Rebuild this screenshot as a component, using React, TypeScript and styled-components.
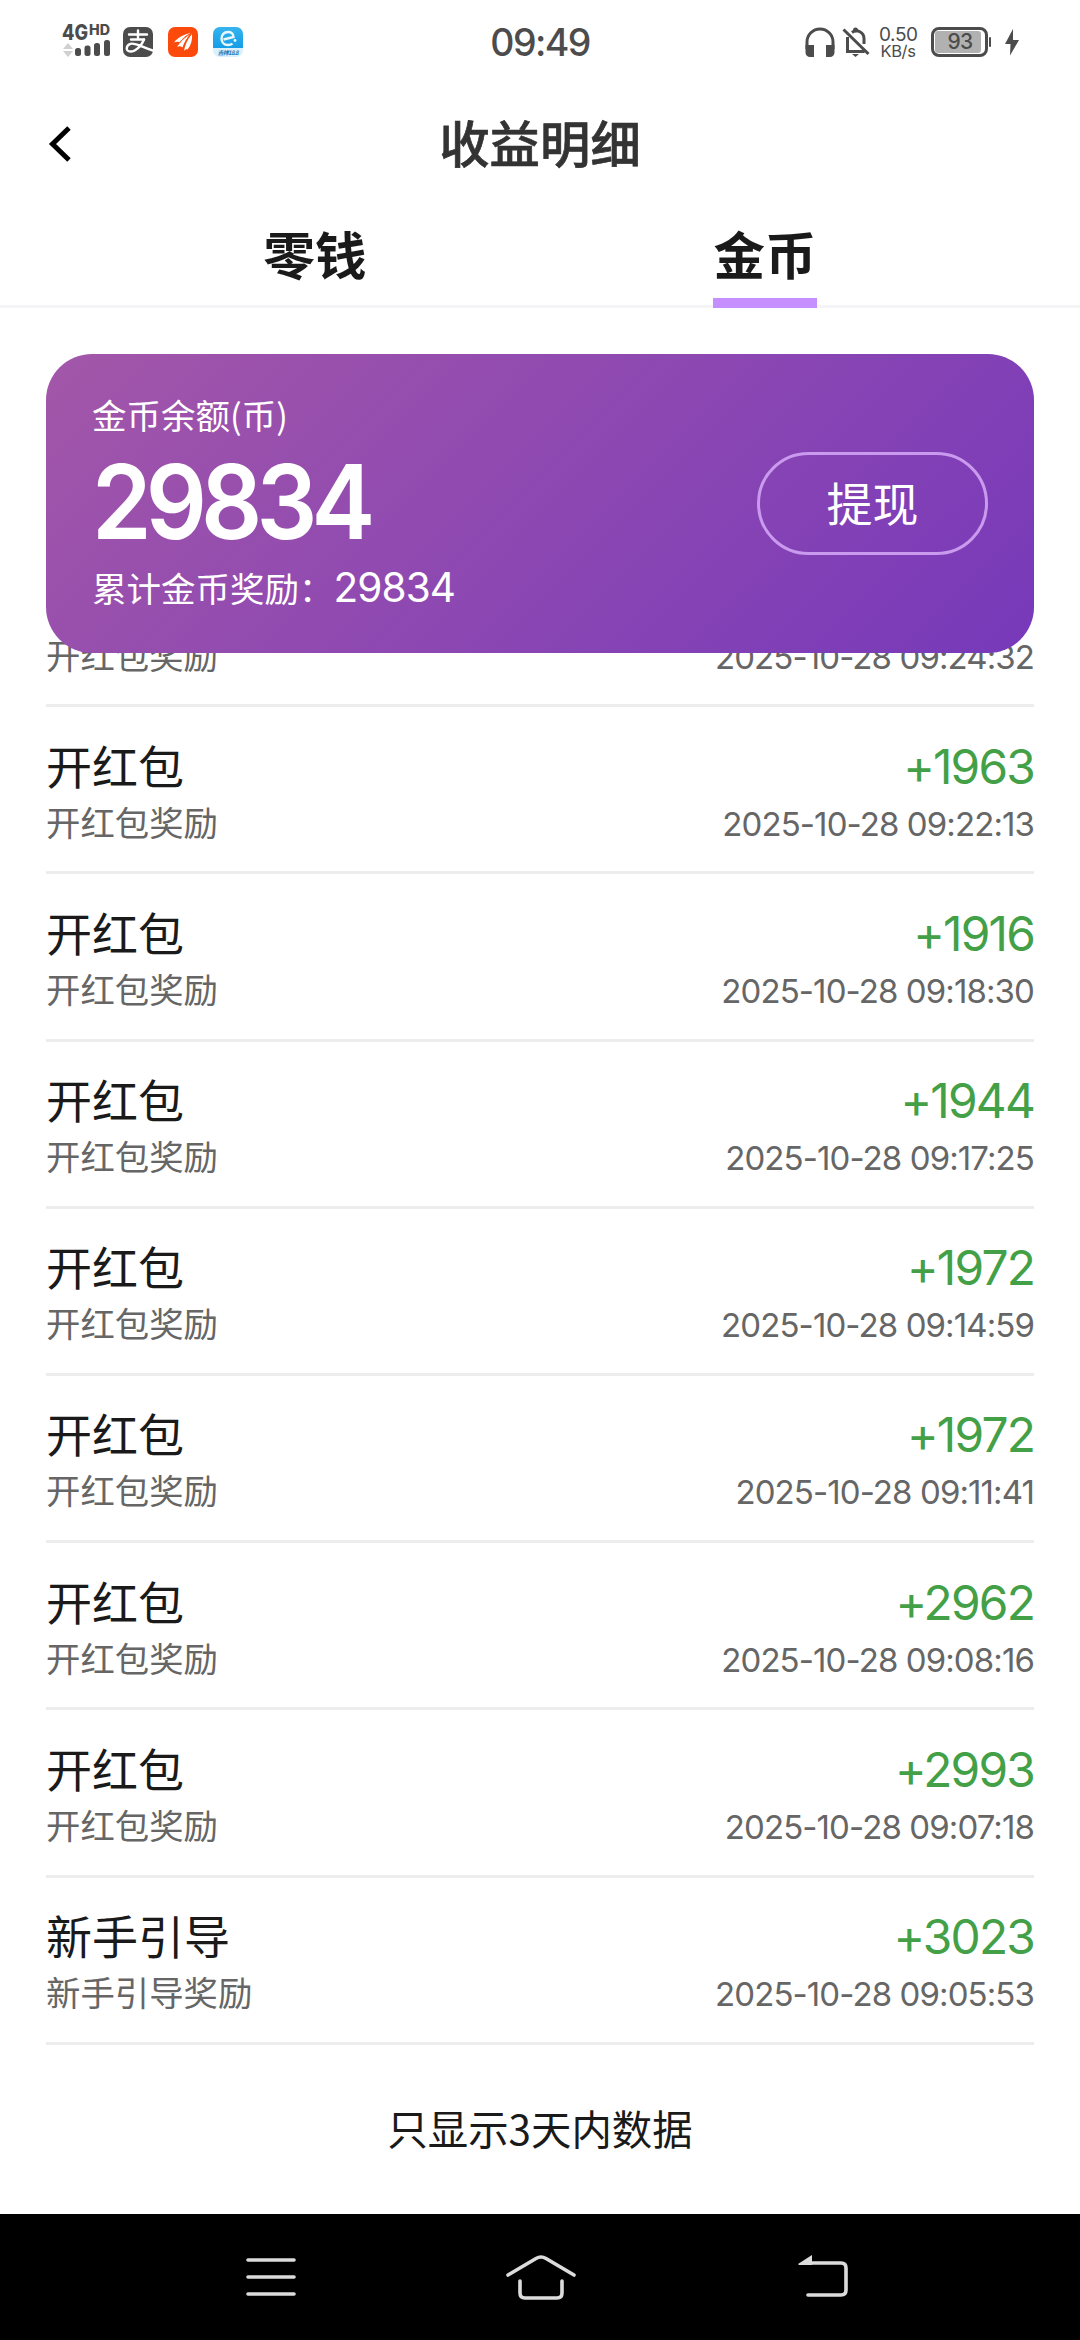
import React from "react";
import styled, { createGlobalStyle } from "styled-components";

const cjk = `"Noto Sans CJK SC", sans-serif`;

const Global = createGlobalStyle`
  * { box-sizing: border-box; }
  body { margin: 0; background: #fff; font-family: Inter, ${cjk}; }
  h1, h2, p { margin: 0; font-weight: 400; }
`;

const Screen = styled.div`
  width: 1080px;
  height: 2340px;
  display: flex;
  flex-direction: column;
  background: #fff;
  overflow: hidden;
`;

const StatusBar = styled.header`
  height: 90px;
  flex: none;
  display: grid;
  grid-template-columns: 460px 160px 1fr;
  color: #4c4c4c;
`;
const StatusLeft = styled.div`
  display: flex;
  align-items: flex-start;
  padding: 22px 0 0 62px;
`;
const Clock = styled.div`
  font: 500 37.5px/85px Inter, sans-serif;
  text-align: center;
  letter-spacing: -1.6px;
`;
const StatusRight = styled.div`
  display: flex;
  align-items: flex-start;
  padding: 27px 0 0 185px;
`;
const Signal = styled.div`
  width: 50px;
  height: 36px;
  margin-right: 11px;
  svg {
    overflow: visible;
  }
`;
const AppIcon = styled.svg`
  width: 30px;
  height: 30px;
  margin: 5px 15px 0 0;
  flex: none;
`;
const MutedBell = styled.svg`
  margin-left: 7px;
`;
const Bolt = styled.svg`
  margin-top: 2px;
`;
const Speed = styled.div`
  width: 38px;
  margin: -1px 14px 0 9px;
  font: 400 19px/17px Inter, sans-serif;
  text-align: center;
  letter-spacing: -0.4px;
  white-space: nowrap;
`;
const SpeedUnit = styled.div`
  font-size: 16.5px;
  line-height: 16px;
`;
const Battery = styled.div`
  position: relative;
  width: 57px;
  height: 30px;
  border: 3px solid #4c4c4c;
  border-radius: 8px;
  padding: 1px 4px 1px 1px;
  margin-right: 17px;
  &::after {
    content: "";
    position: absolute;
    right: -6px;
    top: 7px;
    width: 2px;
    height: 10px;
    border-radius: 1px;
    background: #4c4c4c;
  }
`;
const BatteryFill = styled.div`
  height: 22px;
  border-radius: 3px;
  background: #b1b1b1;
  font: 500 21px/22px Inter, sans-serif;
  text-align: center;
  padding-left: 4px;
  letter-spacing: -0.8px;
`;

const TitleBar = styled.div`
  height: 108px;
  flex: none;
  display: grid;
  grid-template-columns: 120px 1fr 120px;
  align-items: start;
`;
const BackButton = styled.button`
  border: 0;
  height: 108px;
  align-items: center;
  padding: 0 0 0 47px;
  background: none;
  display: flex;
`;
const Title = styled.h1`
  font: 500 50.4px/103px ${cjk};
  -webkit-text-stroke: 0.7px #333;
  color: #333;
  text-align: center;
`;

const Tabs = styled.nav`
  height: 110px;
  flex: none;
  padding: 0 90px;
  display: grid;
  grid-template-columns: 1fr 1fr;
  justify-items: center;
  border-bottom: 3px solid #f5f5f7;
`;
const Tab = styled.div<{ $active?: boolean }>`
  height: 110px;
  font: 700 51.5px/110px ${cjk};
  color: #1a1a1a;
  border-bottom: 10px solid ${(p) => (p.$active ? "#c68fff" : "transparent")};
`;

const Card = styled.section`
  position: relative;
  z-index: 1;
  flex: none;
  height: 299px;
  margin: 46px 46px 0;
  padding: 34px 46px 0;
  border-radius: 46px;
  background: linear-gradient(135deg, #a357a9 0%, #7739ba 100%);
  color: #fff;
  display: flex;
  justify-content: space-between;
`;
const Balance = styled.div`
  display: flex;
  flex-direction: column;
`;
const Label = styled.p`
  font: 400 34.5px/52px ${cjk};
`;
const Amount = styled.p`
  height: 120px;
  font: 600 103px/124px Inter, sans-serif;
  letter-spacing: -6.4px;
  transform: scaleX(0.93);
  transform-origin: left;
`;
const Total = styled.p`
  font: 400 34.5px/54px ${cjk};
  display: flex;
  white-space: nowrap;
`;
const TotalNumber = styled.span`
  font: 400 40.5px/55px Inter, sans-serif;
  letter-spacing: -0.9px;
`;
const Withdraw = styled.button`
  width: 231px;
  height: 103px;
  margin-top: 64px;
  padding: 0 0 5px;
  border: 3px solid #ca9aee;
  border-radius: 52px;
  background: none;
  color: #fff;
  font: 400 46px/92px ${cjk};
`;

const List = styled.ul`
  list-style: none;
  margin: -113px 46px 0;
  padding: 0;
  flex: none;
`;
const Row = styled.li`
  height: 167.2px;
  border-bottom: 3px solid #ededed;
  display: flex;
  justify-content: space-between;
  padding-top: 26.5px;
`;
const Column = styled.div<{ $end?: boolean }>`
  display: flex;
  flex-direction: column;
  align-items: ${(p) => (p.$end ? "flex-end" : "flex-start")};
`;
const RowTitle = styled.h2`
  font: 400 46px/61px ${cjk};
  color: #1a1a1a;
`;
const RowNote = styled.p`
  font: 400 34.4px/52px ${cjk};
  color: #666;
`;
const Gain = styled.p`
  font: 400 47.8px/66px Inter, sans-serif;
  letter-spacing: -1.8px;
  color: #43a047;
`;
const Time = styled.p`
  font: 400 33px/48px Inter, sans-serif;
  letter-spacing: -0.9px;
  color: #666;
`;
const Footnote = styled.p`
  flex: 1;
  padding-top: 53px;
  font: 400 40.4px/60px ${cjk};
  color: #1a1a1a;
  text-align: center;
`;

const SystemNav = styled.footer`
  height: 126px;
  flex: none;
  padding-left: 135px;
  background: #000;
  display: grid;
  grid-template-columns: 272px 268px 297px;
  place-items: center;
`;

const records = [
  ["开红包", "+1944", "2025-10-28 09:24:32"],
  ["开红包", "+1963", "2025-10-28 09:22:13"],
  ["开红包", "+1916", "2025-10-28 09:18:30"],
  ["开红包", "+1944", "2025-10-28 09:17:25"],
  ["开红包", "+1972", "2025-10-28 09:14:59"],
  ["开红包", "+1972", "2025-10-28 09:11:41"],
  ["开红包", "+2962", "2025-10-28 09:08:16"],
  ["开红包", "+2993", "2025-10-28 09:07:18"],
  ["新手引导", "+3023", "2025-10-28 09:05:53"],
];

function Status() {
  return (
    <StatusBar>
      <StatusLeft>
        <Signal>
          <svg width="50" height="36" viewBox="0 0 50 36" fill="#4c4c4c" fontFamily="Inter, sans-serif" fontWeight="800">
            <text x="0" y="18" fontSize="21" textLength="26" lengthAdjust="spacingAndGlyphs">4G</text>
            <text x="27" y="13" fontSize="14" textLength="21" lengthAdjust="spacingAndGlyphs">HD</text>
            <path d="M1 27l5-6 5 6zM1 29l5 6 5-6z" fill="#d0d0d0" />
            <rect x="13" y="26" width="6" height="8" rx="2.5" />
            <rect x="22.5" y="23.5" width="6" height="10.5" rx="2.5" />
            <rect x="32" y="21" width="6" height="13" rx="2.5" />
            <rect x="42" y="18" width="6" height="16" rx="2.5" />
          </svg>
        </Signal>
        <AppIcon viewBox="0 0 30 30">
          <rect width="30" height="30" rx="7" fill="#4c4c4c" />
          <g fill="none" stroke="#fff" strokeWidth="2.4" strokeLinecap="round">
            <path d="M6 7.500h18M15 3.500v8.500M8 12.500h13" />
            <path d="M21 12.500C19 18 13 24.500 7.500 24.500S3 18 7.500 16.800C13 15.500 19 20.500 30 23.500" />
          </g>
        </AppIcon>
        <AppIcon viewBox="0 0 30 30">
          <rect width="30" height="30" rx="7" fill="#fb4a0b" />
          <g fill="#fff">
            <path d="M6 15.500C10 10 16 7.500 23 6c-5 3-8 6-10.500 9.500-2-1-4-1-6.500 0z" />
            <path d="M9 20c3-5 8-10 14.500-13.500C19 11 16.500 15 14.500 20.500c-1.500-1.500-3.500-1.500-5.500-.5z" />
            <path d="M16 24c1-6 3.500-12 8-17 .5 6-1 11.500-4.500 15.500-1-.5-2.500 0-3.500 1.500z" />
          </g>
          <path d="M11.500 16C14 12 18 8.500 23 6.500M15 21.500c1.500-6 4-10.500 8.500-15" stroke="#fb4a0b" strokeWidth="1" fill="none" />
        </AppIcon>
        <AppIcon viewBox="0 0 30 30">
          <defs>
            <linearGradient id="sky" x1="0" y1="0" x2="0" y2="1">
              <stop offset="0" stopColor="#36b4ee" />
              <stop offset="1" stopColor="#149de7" />
            </linearGradient>
          </defs>
          <rect width="30" height="30" rx="7" fill="#d9f1fd" />
          <path d="M7 0h16a7 7 0 0 1 7 7v14H0V7a7 7 0 0 1 7-7z" fill="url(#sky)" />
          <path d="M10.500 12.500l10-2.500c0-3.500-2.500-5-5.500-5-4 0-6.500 3-6.500 6.500S11 18 15 18c2 0 3.500-.5 4.500-1.500" fill="none" stroke="#e8f8ff" strokeWidth="2.4" />
          <circle cx="22" cy="13.500" r="1.400" fill="#e8f8ff" />
          <text x="4.5" y="27.500" fontSize="6" fontWeight="700" fontStyle="italic" fontFamily={cjk} fill="#1976b8" textLength="21">吉祥18.8</text>
        </AppIcon>
      </StatusLeft>
      <Clock>09:49</Clock>
      <StatusRight>
        <svg width="30" height="30" viewBox="0 0 30 30" fill="#4c4c4c">
          <path d="M2 22v-7a13 13 0 0 1 26 0v7" fill="none" stroke="#4c4c4c" strokeWidth="3" />
          <path d="M.5 18H9v12H5a4.500 4.500 0 0 1-4.500-4.500zM21 18h8.500v7.500A4.500 4.500 0 0 1 25 30h-4z" />
        </svg>
        <MutedBell width="28" height="30" viewBox="0 0 28 30" fill="none" stroke="#4c4c4c" strokeWidth="3">
          <path d="M1.500 2.500l25 24.500M5.500 10v14.500h17M10 5.500c5-4 12 0 12 6v5.500" />
          <path d="M10 27h7l-3.500 3z" fill="#4c4c4c" stroke="none" />
          <circle cx="13.500" cy="3" r="2.500" fill="#4c4c4c" stroke="none" />
        </MutedBell>
        <Speed>
          0.50
          <SpeedUnit>KB/s</SpeedUnit>
        </Speed>
        <Battery>
          <BatteryFill>93</BatteryFill>
        </Battery>
        <Bolt width="14" height="27" viewBox="0 0 14 27">
          <path d="M8 0L0 15h5.500L5 26.500 14 11H8z" fill="#4c4c4c" />
        </Bolt>
      </StatusRight>
    </StatusBar>
  );
}

export default function App() {
  return (
    <Screen>
      <Global />
      <Status />
      <TitleBar>
        <BackButton aria-label="返回">
          <svg width="26" height="40" viewBox="0 0 26 40" fill="none" stroke="#000" strokeWidth="5">
            <path d="M22 4L5.500 20 22 36" />
          </svg>
        </BackButton>
        <Title>收益明细</Title>
      </TitleBar>
      <Tabs>
        <Tab>零钱</Tab>
        <Tab $active>金币</Tab>
      </Tabs>
      <Card>
        <Balance>
          <Label>金币余额(币)</Label>
          <Amount>29834</Amount>
          <Total>
            累计金币奖励：<TotalNumber>29834</TotalNumber>
          </Total>
        </Balance>
        <Withdraw>提现</Withdraw>
      </Card>
      <List>
        {records.map(([title, gain, time]) => (
          <Row key={time}>
            <Column>
              <RowTitle>{title}</RowTitle>
              <RowNote>{title}奖励</RowNote>
            </Column>
            <Column $end>
              <Gain>{gain}</Gain>
              <Time>{time}</Time>
            </Column>
          </Row>
        ))}
      </List>
      <Footnote>只显示3天内数据</Footnote>
      <SystemNav>
        <svg width="52" height="44" viewBox="0 0 52 44" stroke="#dcdcdc" strokeWidth="3.6" strokeLinecap="round">
          <path d="M3 5h46M3 22h46M3 39h46" />
        </svg>
        <svg width="72" height="46" viewBox="0 0 72 46" fill="none" stroke="#dcdcdc" strokeWidth="3.6" strokeLinecap="round">
          <path d="M3 21L31 4.500q5-3 10 0L69 21M15 27v12q0 5 5 5h32q5 0 5-5V27" />
        </svg>
        <svg width="54" height="46" viewBox="0 0 54 46" fill="none" stroke="#dcdcdc" strokeWidth="3.6" strokeLinecap="round">
          <path d="M10 9h34q5 0 5 5v22q0 5-5 5H11" />
          <path d="M1 10L15 1v10H2z" fill="#dcdcdc" stroke="none" />
        </svg>
      </SystemNav>
    </Screen>
  );
}
